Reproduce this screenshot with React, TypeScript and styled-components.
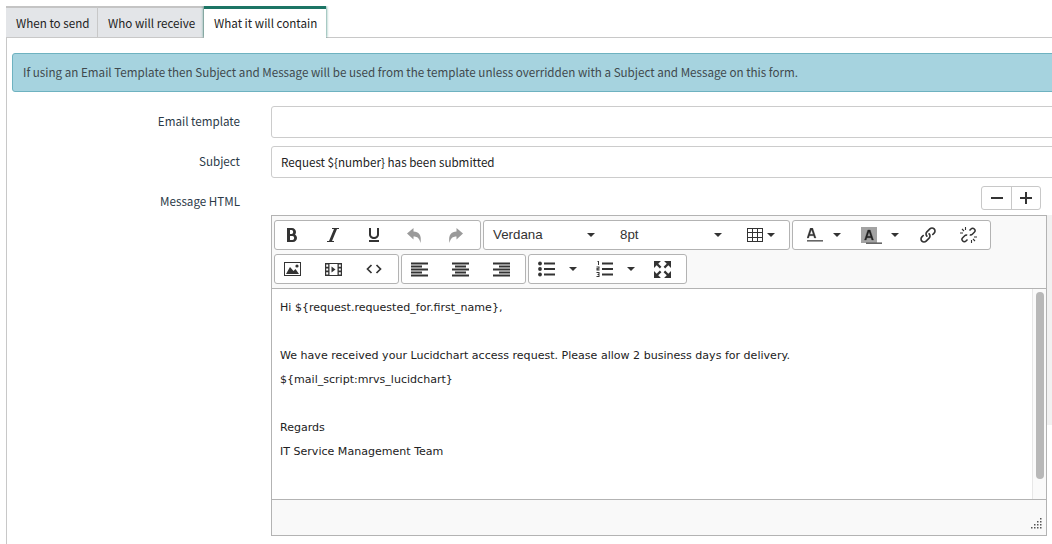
import styled, { createGlobalStyle } from "styled-components";
import { ImBold, ImItalic, ImUnderline, ImLink, ImEnlarge } from "react-icons/im";
import type { ReactNode } from "react";

const GlobalStyle = createGlobalStyle`
  html, body {
    margin: 0;
    padding: 0;
    background: #fff;
    overflow: hidden;
  }
  * {
    box-sizing: border-box;
  }
`;

const Page = styled.div`
  position: relative;
  width: 1052px;
  height: 544px;
  overflow: hidden;
  padding: 6px 0 0 6px;
  font-family: "Noto Sans CJK JP", "Open Sans", sans-serif;
  font-size: 11.63px;
  color: #2e2e2e;
`;
const Tabs = styled.div`
  display: flex;
  width: 1100px;
  height: 32px;
  border-bottom: 1px solid #c8c8c8;
`;
const Tab = styled.div<{ $active?: boolean; $w: number }>`
  width: ${(p) => p.$w}px;
  height: ${(p) => (p.$active ? 32 : 31)}px;
  padding: 0 10px;
  line-height: ${(p) => (p.$active ? 29 : 31)}px;
  background: ${(p) => (p.$active ? "#fff" : "#e3e5e8")};
  border-top: ${(p) => (p.$active ? "3px solid #1c7565" : "2px solid #c4c4c4")};
  border-right: ${(p) => (p.$active ? "none" : "1px solid #c8c8c8")};
  box-shadow: ${(p) => (p.$active ? "0 0 3px #1c7565" : "none")};
  clip-path: ${(p) => (p.$active ? "inset(0 -4px 0 -4px)" : "none")};
  color: #222;
  white-space: nowrap;
  position: relative;
`;
const Panel = styled.div`
  width: 1100px;
  height: 520px;
  border-left: 1px solid #c8c8c8;
  padding: 15px 0 0 5px;
`;
const Banner = styled.div`
  height: 39px;
  padding-left: 10px;
  line-height: 37px;
  background: #a6d3df;
  border: 1px solid #6eb2c0;
  border-radius: 3px;
  color: #40494d;
  margin-bottom: 14px;
`;
const FormRow = styled.div`
  display: flex;
  margin-bottom: 8px;
`;
const Label = styled.label`
  width: 228px;
  margin-right: 31px;
  text-align: right;
  line-height: 31px;
  color: #2b3a48;
  flex: none;
`;
const Field = styled.div`
  flex: 1;
  height: 32px;
  padding-left: 9px;
  line-height: 30px;
  border: 1px solid #ccc;
  border-radius: 3px;
  color: #222;
`;
const HtmlRow = styled.div`
  display: flex;
`;
const Right = styled.div`
  width: 776px;
  flex: none;
`;
const ZoomBar = styled.div`
  display: flex;
  justify-content: flex-end;
  padding-right: 6px;
  margin-bottom: 5px;
`;
const ZoomGroup = styled.div`
  display: flex;
  height: 24px;
  border: 1px solid #c8c8c8;
  border-radius: 3px;
`;
const ZoomButton = styled.div<{ $w: number }>`
  width: ${(p) => p.$w}px;
  display: flex;
  align-items: center;
  justify-content: center;
  & + & {
    border-left: 1px solid #c8c8c8;
  }
`;
const Editor = styled.div`
  width: 776px;
  height: 321px;
  border: 1px solid #b3b3b3;
  display: flex;
  flex-direction: column;
`;
const Toolbar = styled.div`
  height: 73px;
  background: #f9f9f9;
  border-bottom: 1px solid #b3b3b3;
  padding: 4px 2px 0;
  display: flex;
  flex-direction: column;
  gap: 4px;
  flex: none;
`;
const ToolRow = styled.div`
  display: flex;
  gap: 2px;
`;
const Group = styled.div`
  display: flex;
  height: 30px;
  background: #fff;
  border: 1px solid #b3b3b3;
  border-radius: 3px;
  color: #333;
`;
const ToolButton = styled.div<{ $w?: number; $pad?: number; $gap?: number; $muted?: boolean }>`
  width: ${(p) => p.$w ?? 41}px;
  padding-left: ${(p) => p.$pad ?? 9}px;
  display: flex;
  align-items: center;
  gap: ${(p) => p.$gap ?? 0}px;
  color: ${(p) => (p.$muted ? "#9a9a9a" : "#333")};
  flex: none;
`;
const ListBox = styled.div`
  width: 127px;
  padding: 0 16px 1px 9px;
  display: flex;
  align-items: center;
  justify-content: space-between;
  font-family: "Liberation Sans", Arial, sans-serif;
  font-size: 13.33px;
  color: #333;
`;
const Caret = styled.span`
  width: 0;
  height: 0;
  flex: none;
  border-left: 4px solid transparent;
  border-right: 4px solid transparent;
  border-top: 4px solid #333;
`;
const Content = styled.div`
  flex: 1;
  position: relative;
  padding: 12px 8px 0;
  font-family: "DejaVu Sans", Verdana, sans-serif;
  font-size: 11.06px;
  color: #222;
`;
const Para = styled.p`
  margin: 0;
  height: 24px;
  line-height: 14px;
`;
const ScrollTrack = styled.div`
  position: absolute;
  top: 0;
  right: 0;
  bottom: 0;
  width: 14px;
  background: #fafafa;
  border-left: 1px solid #e7e7e7;
`;
const ScrollThumb = styled.div`
  position: absolute;
  top: 3px;
  left: 3px;
  width: 8px;
  height: 187px;
  background: #b8b8b8;
  border-radius: 4px;
`;
const StatusBar = styled.div`
  height: 36px;
  flex: none;
  background: #f9f9f9;
  border-top: 1px solid #b3b3b3;
  position: relative;
`;
const Grip = styled.svg`
  position: absolute;
  right: 3px;
  bottom: 5px;
`;
const PageScroll = styled.div`
  position: absolute;
  left: 1047px;
  top: 215px;
  width: 5px;
  height: 210px;
  background: #f1f1f1;
`;

const Svg = ({ children, w = 16, h = 16 }: { children: ReactNode; w?: number; h?: number }) => (
  <svg width={w} height={h} viewBox={`0 0 ${w} ${h}`} fill="currentColor">
    {children}
  </svg>
);

const AlignIcon = ({ kind }: { kind: "left" | "center" | "right" }) => {
  const x = (w: number) => (kind === "left" ? 0 : kind === "center" ? (17 - w) / 2 : 17 - w);
  const rows = [17, 11, 17, 11, 17];
  return (
    <Svg w={17} h={15}>
      {rows.map((w, i) => (
        <rect key={i} x={x(w)} y={i * 3 + 0.5} width={w} height={2} />
      ))}
    </Svg>
  );
};

const TableIcon = () => (
  <svg width="16" height="14" viewBox="0 0 16 14" fill="none" stroke="#333" strokeWidth="1">
    <rect x="0.5" y="0.5" width="15" height="13" />
    <path d="M5.5 0v14M10.5 0v14M0 4.5h16M0 9.5h16" />
  </svg>
);

const UndoIcon = ({ flip }: { flip?: boolean }) => (
  <svg
    width="15"
    height="15"
    viewBox="0 0 15 15"
    fill="currentColor"
    transform={flip ? "scale(-1 1)" : undefined}
  >
    <path d="M0 5.500L6.500 0v3.500C11.500 3.500 15 7 13.500 15 12.500 10.500 10.500 8.500 6.500 8.500V11.500z" />
  </svg>
);

const ColorIcon = () => (
  <svg width="16" height="14" viewBox="0 0 16 14">
    <path
      d="M3.300 0h2.400L9 10H7.300L6.600 7.700H2.400L1.700 10H0zM2.900 6.200h3.200L4.500 1.700z"
      fill="#333"
      stroke="#333"
      strokeWidth="0.3"
    />
    <rect x="0" y="12" width="16" height="1.600" fill="#666" />
  </svg>
);

const BackColorIcon = () => (
  <svg width="21" height="17" viewBox="0 0 21 17">
    <rect x="0" y="0" width="16" height="16" fill="#a3a3a3" />
    <path
      d="M6.800 3h2.400L12.500 13H10.800L10.100 10.700H5.900L5.200 13H3.500zM6.400 9.200h3.200L8 4.700z"
      fill="#222"
      stroke="#222"
      strokeWidth="0.3"
    />
    <rect x="5" y="15.400" width="16" height="1.600" fill="#666" />
  </svg>
);

const ImageIcon = () => (
  <Svg w={17} h={14}>
    <path d="M0 0h17v14H0zM1 1v12h15V1z" fillRule="evenodd" />
    <path d="M2 12l4-7 3.500 4 2-2 3.500 5z" />
    <circle cx="13" cy="4" r="1.600" />
  </Svg>
);

const FilmIcon = () => (
  <Svg w={17} h={13}>
    <path d="M0 0h4.500v13H0zM12.500 0H17v13h-4.500zM4.500 0h8v1h-8zM4.500 12h8v1h-8z" />
    <path d="M6.500 3.500L10.500 6.500 6.500 9.500z" />
    <path
      d="M1.200 1.500h2v2.200h-2zM1.200 5.400h2v2.200h-2zM1.200 9.300h2v2.200h-2zM13.800 1.500h2v2.200h-2zM13.800 5.400h2v2.200h-2zM13.800 9.300h2v2.200h-2z"
      fill="#fff"
    />
  </Svg>
);

const CodeIcon = () => (
  <svg width="16" height="10" viewBox="0 0 16 10" fill="none" stroke="#333" strokeWidth="1.700">
    <path d="M5.500 1L1.500 5l4 4M10.500 1l4 4-4 4" />
  </svg>
);

const BulletIcon = () => (
  <Svg w={17} h={16}>
    <circle cx="2" cy="2.500" r="1.900" />
    <circle cx="2" cy="8" r="1.900" />
    <circle cx="2" cy="13.500" r="1.900" />
    <rect x="6" y="1.500" width="11" height="2" />
    <rect x="6" y="7" width="11" height="2" />
    <rect x="6" y="12.500" width="11" height="2" />
  </Svg>
);

const NumberIcon = () => (
  <Svg w={17} h={16}>
    <rect x="6" y="1.500" width="11" height="2" />
    <rect x="6" y="7" width="11" height="2" />
    <rect x="6" y="12.500" width="11" height="2" />
    <path d="M1.500 0H3v4H2V1H1.500zM0.500 5.500h3v2.200H1.500v.6h2V9.500h-3V7h2v-.5h-2zM0.500 11h3v5h-3v-1h2v-1h-1v-1h1v-1h-2z" />
  </Svg>
);

const UnlinkIcon = () => (
  <svg width="17" height="16" viewBox="0 0 17 16" fill="none" stroke="#333">
    <path strokeWidth="1.500" d="M9.500 3.500l1.500-1.500a2.300 2.300 0 0 1 3.300 3.300l-2 2a2.300 2.300 0 0 1-2.500.5" />
    <path strokeWidth="1.500" d="M7.500 12.500L6 14a2.300 2.300 0 0 1-3.300-3.300l2-2a2.300 2.300 0 0 1 2.500-.5" />
    <path strokeWidth="1.100" d="M5.500 0v3M2 2l2 2M0 6h3M11.500 13v3M15 14l-2-2M17 10h-3" />
  </svg>
);

const App = () => {
  return (
    <Page>
      <GlobalStyle />
      <Tabs>
        <Tab $w={92}>When to send</Tab>
        <Tab $w={106}>Who will receive</Tab>
        <Tab $w={122} $active>
          What it will contain
        </Tab>
      </Tabs>
      <Panel>
        <Banner>
          If using an Email Template then Subject and Message will be used from the template unless
          overridden with a Subject and Message on this form.
        </Banner>
        <FormRow>
          <Label>Email template</Label>
          <Field />
        </FormRow>
        <FormRow>
          <Label>Subject</Label>
          <Field>{"Request ${number} has been submitted"}</Field>
        </FormRow>
        <HtmlRow>
          <Label>Message HTML</Label>
          <Right>
            <ZoomBar>
              <ZoomGroup>
                <ZoomButton $w={29}>
                  <svg width="12" height="2">
                    <rect width="12" height="2" fill="#333" />
                  </svg>
                </ZoomButton>
                <ZoomButton $w={29}>
                  <svg width="12" height="12">
                    <path d="M5 0h2v5h5v2H7v5H5V7H0V5h5z" fill="#333" />
                  </svg>
                </ZoomButton>
              </ZoomGroup>
            </ZoomBar>
            <Editor>
              <Toolbar>
                <ToolRow>
                  <Group>
                    <ToolButton>
                      <ImBold size={16} />
                    </ToolButton>
                    <ToolButton>
                      <ImItalic size={16} />
                    </ToolButton>
                    <ToolButton>
                      <ImUnderline size={16} />
                    </ToolButton>
                    <ToolButton $muted>
                      <UndoIcon />
                    </ToolButton>
                    <ToolButton $muted>
                      <UndoIcon flip />
                    </ToolButton>
                  </Group>
                  <Group>
                    <ListBox>
                      Verdana
                      <Caret />
                    </ListBox>
                    <ListBox>
                      8pt
                      <Caret />
                    </ListBox>
                    <ToolButton $w={51} $gap={4}>
                      <TableIcon />
                      <Caret />
                    </ToolButton>
                  </Group>
                  <Group>
                    <ToolButton $w={54} $pad={14} $gap={10}>
                      <ColorIcon />
                      <Caret />
                    </ToolButton>
                    <ToolButton $w={59} $pad={14} $gap={9}>
                      <BackColorIcon />
                      <Caret />
                    </ToolButton>
                    <ToolButton $pad={14}>
                      <ImLink size={16} />
                    </ToolButton>
                    <ToolButton $pad={13} $w={43}>
                      <UnlinkIcon />
                    </ToolButton>
                  </Group>
                </ToolRow>
                <ToolRow>
                  <Group>
                    <ToolButton>
                      <ImageIcon />
                    </ToolButton>
                    <ToolButton>
                      <FilmIcon />
                    </ToolButton>
                    <ToolButton>
                      <CodeIcon />
                    </ToolButton>
                  </Group>
                  <Group>
                    <ToolButton>
                      <AlignIcon kind="left" />
                    </ToolButton>
                    <ToolButton>
                      <AlignIcon kind="center" />
                    </ToolButton>
                    <ToolButton>
                      <AlignIcon kind="right" />
                    </ToolButton>
                  </Group>
                  <Group>
                    <ToolButton $w={58} $gap={14}>
                      <BulletIcon />
                      <Caret />
                    </ToolButton>
                    <ToolButton $w={58} $gap={14}>
                      <NumberIcon />
                      <Caret />
                    </ToolButton>
                    <ToolButton>
                      <ImEnlarge size={17} />
                    </ToolButton>
                  </Group>
                </ToolRow>
              </Toolbar>
              <Content>
                <Para>{"Hi ${request.requested_for.first_name},"}</Para>
                <Para />
                <Para>
                  We have received your Lucidchart access request. Please allow 2 business days for
                  delivery.
                </Para>
                <Para>{"${mail_script:mrvs_lucidchart}"}</Para>
                <Para />
                <Para>Regards</Para>
                <Para>IT Service Management Team</Para>
                <ScrollTrack>
                  <ScrollThumb />
                </ScrollTrack>
              </Content>
              <StatusBar>
                <Grip width="12" height="12" fill="#555">
                  {[
                    [9, 0],
                    [9, 3],
                    [6, 3],
                    [9, 6],
                    [6, 6],
                    [3, 6],
                    [9, 9],
                    [6, 9],
                    [3, 9],
                    [0, 9],
                  ].map(([x, y]) => (
                    <rect key={`${x}-${y}`} x={x} y={y} width="1.500" height="1.500" />
                  ))}
                </Grip>
              </StatusBar>
            </Editor>
          </Right>
        </HtmlRow>
      </Panel>
      <PageScroll />
    </Page>
  );
};

export default App;
